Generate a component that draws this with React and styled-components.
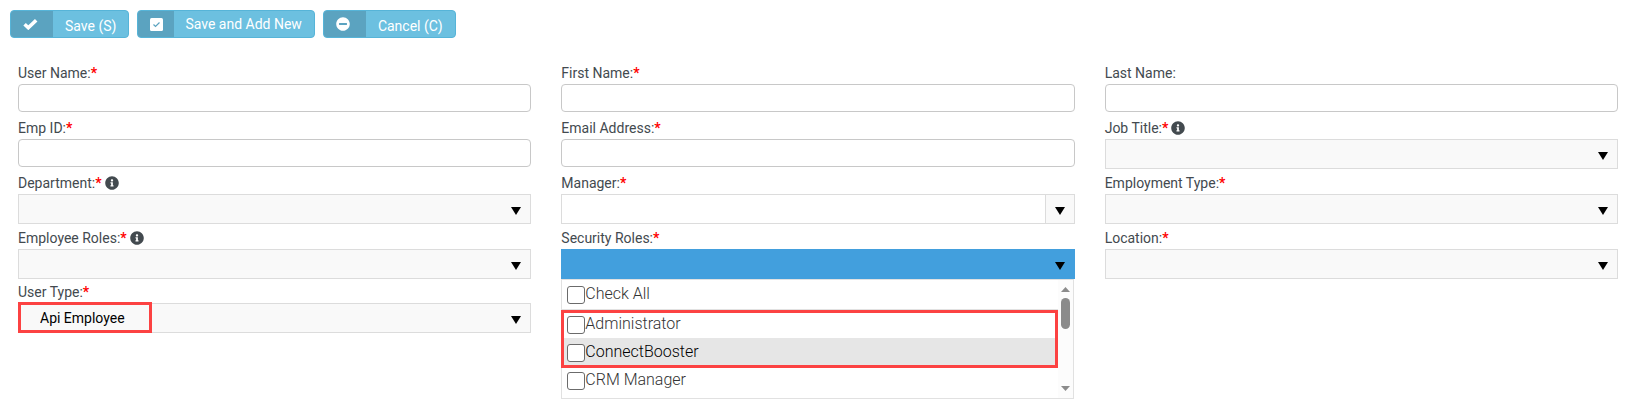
import React, { useState } from 'react';
import styled, { createGlobalStyle } from 'styled-components';
import { FaInfoCircle, FaMinusCircle } from 'react-icons/fa';

const GlobalStyle = createGlobalStyle`
  * {
    box-sizing: border-box;
  }
  body {
    margin: 0;
    background-color: #fff;
    color: #434a4f;
    font-family: Roboto, 'Liberation Sans', sans-serif;
    font-size: 14px;
  }
  button, input, select {
    font: inherit;
    margin: 0;
  }
`;

const Page = styled.form`
  min-height: 100vh;
  padding: 10px 10px 10px 18px;
`;

const Toolbar = styled.div`
  display: flex;
  gap: 8px;
  margin: 0 0 21px -8px;
`;

const ToolButton = styled.button`
  display: flex;
  height: 28px;
  padding: 0;
  border: 1px solid #56b4d8;
  border-radius: 4px;
  background-color: #6cc0e0;
  color: #fff;
  overflow: hidden;
  cursor: pointer;
`;

const ToolIcon = styled.span`
  display: flex;
  align-items: center;
  justify-content: center;
  width: ${(props) => (props.$narrow ? 36 : 42)}px;
  height: 26px;
  padding-right: ${(props) => (props.$narrow ? 0 : 4)}px;
  background-color: #5ba3c0;
`;

const ToolText = styled.span`
  padding: 0 12px 0 ${(props) => (props.$raised ? 11 : 12)}px;
  line-height: ${(props) => (props.$raised ? 26 : 31)}px;
`;

const Fields = styled.div`
  display: grid;
  grid-template-columns: repeat(3, minmax(0, 1fr));
  grid-template-rows: 55px 55px 55px 54px 55px;
  column-gap: 30px;
`;

const Field = styled.div`
  grid-column: ${(props) => props.$column};
  grid-row: ${(props) => props.$row};
`;

const LabelRow = styled.div`
  display: flex;
  align-items: center;
  height: 25px;
  padding-top: 3px;
  line-height: 22px;
`;

const Required = styled.span`
  color: #f00;
  font-weight: 700;
`;

const Info = styled(FaInfoCircle)`
  width: 14px;
  height: 14px;
  margin-left: 3px;
`;

const TextInput = styled.input`
  display: block;
  width: 100%;
  height: 28px;
  padding: 0 8px;
  border: 1px solid #c8c8c8;
  border-radius: 4px;
  background-color: #fff;
`;

const SelectWrap = styled.div`
  position: relative;
  height: 30px;
`;

const Select = styled.select`
  display: block;
  width: 100%;
  height: 30px;
  padding: 0 30px 0 21px;
  appearance: none;
  border: 1px solid #dcdcdc;
  border-radius: 0;
  background-color: #f9f9f9;
  color: #000;
`;

const Arrow = styled.svg`
  display: block;
  width: 10px;
  height: 8px;
  fill: #000;
`;

const ArrowOverlay = styled.span`
  position: absolute;
  right: 10px;
  top: 13px;
  pointer-events: none;
`;

const Combo = styled.div`
  display: flex;
  height: 30px;
  border: 1px solid #dcdcdc;
`;

const ComboInput = styled.input`
  flex: 1;
  min-width: 0;
  padding: 0 8px;
  border: 0;
  background-color: #fff;
`;

const ComboButton = styled.button`
  width: 29px;
  padding: 4px 9px 0;
  border: 0;
  border-left: 1px solid #dcdcdc;
  background-color: #f9f9f9;
`;

const RolesButton = styled.button`
  display: flex;
  align-items: center;
  justify-content: flex-end;
  width: 100%;
  height: 30px;
  padding: 4px 10px 0;
  border: 0;
  background-color: #429fdd;
`;

const RolesPanel = styled.div`
  position: absolute;
  top: 30px;
  left: 0;
  right: 1px;
  z-index: 1;
  display: flex;
  height: 120px;
  border: 1px solid #e1e1e1;
  background-color: #fff;
`;

const RolesList = styled.div`
  flex: 1;
  overflow: hidden;
`;

const RoleOption = styled.label`
  display: flex;
  align-items: flex-start;
  height: ${(props) => (props.$header ? 30 : 28)}px;
  padding: 6px 5px 0;
  border-bottom: ${(props) => (props.$header ? '1px solid #e1e1e1' : '0')};
  background-color: ${(props) => (props.$hovered ? '#e6e6e6' : '#fff')};
  color: ${(props) => (props.$hovered ? '#000' : '#333')};
  font-size: 16px;
  font-weight: 300;
  line-height: 16px;
`;

const Checkbox = styled.input`
  width: 18px;
  height: 18px;
  appearance: none;
  border: 1px solid #6b6b6b;
  border-radius: 3px;
  background-color: #fff;

  &:checked {
    background-color: #429fdd;
  }
`;

const ScrollTrack = styled.div`
  display: flex;
  flex-direction: column;
  align-items: center;
  width: 15px;
  padding: 7px 0;
  background-color: #fcfcfc;
`;

const ScrollArrow = styled.svg`
  width: 9px;
  height: 5px;
  fill: #8b8b8b;
`;

const ScrollThumb = styled.div`
  width: 9px;
  height: 31px;
  margin: 6px 0 auto;
  border-radius: 5px;
  background-color: #8b8b8b;
`;

const Highlight = styled.div`
  position: absolute;
  left: 0;
  border: 3px solid #fc4242;
  pointer-events: none;
`;

const ValueHighlight = styled(Highlight)`
  top: -1px;
  width: 134px;
  height: 31px;
`;

const RolesHighlight = styled(Highlight)`
  top: 61px;
  right: 17px;
  z-index: 2;
  height: 58px;
`;

const CheckIcon = () => (
  <svg width="15" height="12" viewBox="0 0 15 12" fill="none">
    <path d="M1.6 6.2 5.3 9.7 13.2 2.2" stroke="#fff" strokeWidth="3.6" />
  </svg>
);

const CheckBoxIcon = () => (
  <svg width="13" height="13" viewBox="0 0 13 13">
    <rect width="13" height="13" rx="1.5" fill="#fff" />
    <path d="M3.5 6.5 5.5 8.5 9.5 4.5" stroke="#5ba3c0" strokeWidth="1.2" fill="none" />
  </svg>
);

const DownArrow = () => (
  <Arrow viewBox="0 0 10 8" aria-hidden="true">
    <path d="M0 0h10L5 8z" />
  </Arrow>
);

const FieldLabel = ({ id, text, required, info }) => (
  <LabelRow>
    <label htmlFor={id}>
      {text}:{required && <Required>*</Required>}
    </label>
    {info && <Info />}
  </LabelRow>
);

const TextField = ({ id, text, required, column, row }) => (
  <Field $column={column} $row={row}>
    <FieldLabel id={id} text={text} required={required} />
    <TextInput id={id} type="text" />
  </Field>
);

const SelectField = ({ id, text, info, column, row, options = [''], children }) => (
  <Field $column={column} $row={row}>
    <FieldLabel id={id} text={text} required info={info} />
    <SelectWrap>
      <Select id={id}>
        {options.map((option) => (
          <option key={option}>{option}</option>
        ))}
      </Select>
      <ArrowOverlay>
        <DownArrow />
      </ArrowOverlay>
      {children}
    </SelectWrap>
  </Field>
);

const roles = ['Check All', 'Administrator', 'ConnectBooster', 'CRM Manager'];

const RolesField = () => {
  const [open, setOpen] = useState(true);

  return (
    <Field $column={2} $row={4}>
      <FieldLabel id="securityRoles" text="Security Roles" required />
      <SelectWrap>
        <RolesButton
          id="securityRoles"
          type="button"
          aria-expanded={open}
          onClick={() => setOpen(!open)}
        >
          <DownArrow />
        </RolesButton>
        {open && (
          <>
            <RolesPanel>
              <RolesList>
                {roles.map((role, index) => (
                  <RoleOption
                    key={role}
                    $header={index === 0}
                    $hovered={role === 'ConnectBooster'}
                  >
                    <Checkbox type="checkbox" />
                    {role}
                  </RoleOption>
                ))}
              </RolesList>
              <ScrollTrack>
                <ScrollArrow viewBox="0 0 9 5">
                  <path d="M0 5h9L4.5 0z" />
                </ScrollArrow>
                <ScrollThumb />
                <ScrollArrow viewBox="0 0 9 5">
                  <path d="M0 0h9L4.5 5z" />
                </ScrollArrow>
              </ScrollTrack>
            </RolesPanel>
            <RolesHighlight />
          </>
        )}
      </SelectWrap>
    </Field>
  );
};

const App = () => (
  <>
    <GlobalStyle />
    <Page>
      <Toolbar>
        <ToolButton type="button">
          <ToolIcon>
            <CheckIcon />
          </ToolIcon>
          <ToolText>Save (S)</ToolText>
        </ToolButton>
        <ToolButton type="button">
          <ToolIcon $narrow>
            <CheckBoxIcon />
          </ToolIcon>
          <ToolText $raised>Save and Add New</ToolText>
        </ToolButton>
        <ToolButton type="button">
          <ToolIcon>
            <FaMinusCircle size={14} />
          </ToolIcon>
          <ToolText>Cancel (C)</ToolText>
        </ToolButton>
      </Toolbar>
      <Fields>
        <TextField id="userName" text="User Name" required column={1} row={1} />
        <TextField id="firstName" text="First Name" required column={2} row={1} />
        <TextField id="lastName" text="Last Name" column={3} row={1} />
        <TextField id="empId" text="Emp ID" required column={1} row={2} />
        <TextField id="email" text="Email Address" required column={2} row={2} />
        <SelectField id="jobTitle" text="Job Title" info column={3} row={2} />
        <SelectField id="department" text="Department" info column={1} row={3} />
        <Field $column={2} $row={3}>
          <FieldLabel id="manager" text="Manager" required />
          <Combo>
            <ComboInput id="manager" type="text" />
            <ComboButton type="button" aria-label="Show managers">
              <DownArrow />
            </ComboButton>
          </Combo>
        </Field>
        <SelectField id="employmentType" text="Employment Type" column={3} row={3} />
        <SelectField id="employeeRoles" text="Employee Roles" info column={1} row={4} />
        <RolesField />
        <SelectField id="location" text="Location" column={3} row={4} />
        <SelectField
          id="userType"
          text="User Type"
          column={1}
          row={5}
          options={['Api Employee']}
        >
          <ValueHighlight />
        </SelectField>
      </Fields>
    </Page>
  </>
);

export default App;
